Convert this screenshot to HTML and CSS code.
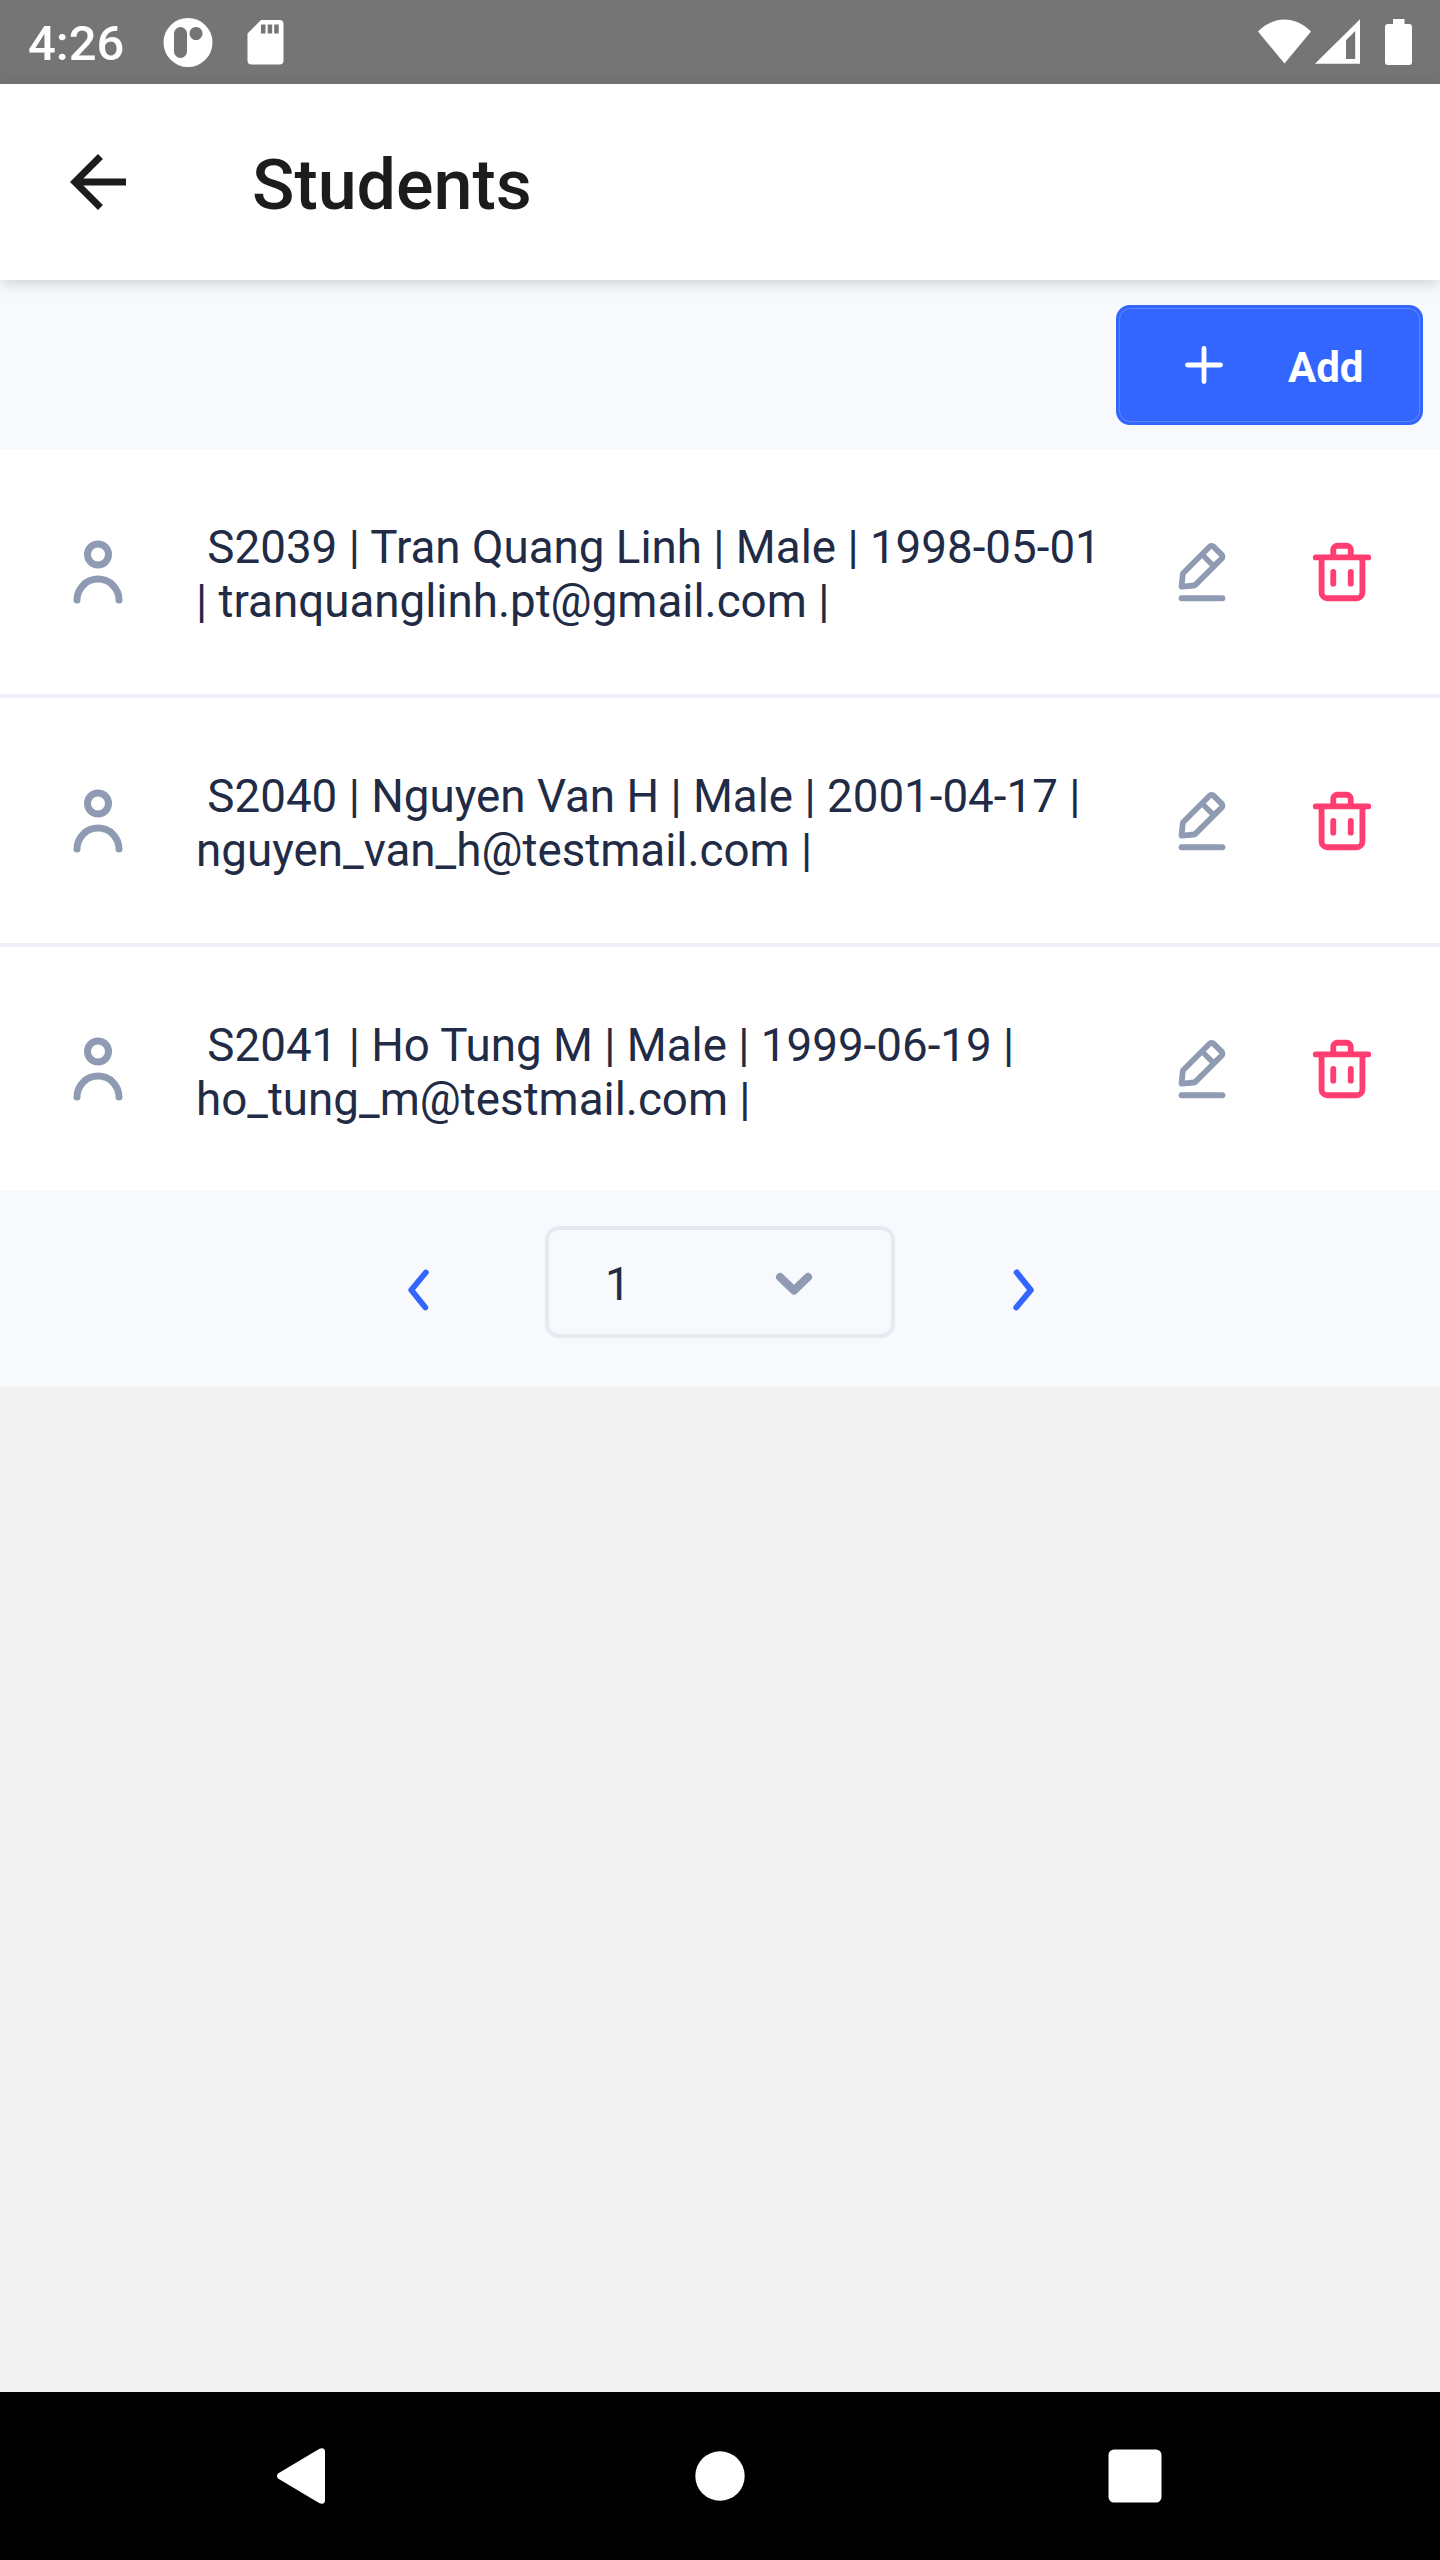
FILE: index.html
```html
<!DOCTYPE html>
<html lang="en">
<head>
<meta charset="utf-8">
<title>Students</title>
<link rel="stylesheet" href="styles.css">
</head>
<body>
<svg class="sprite" width="0" height="0">
  <symbol id="person" viewBox="0 0 24 24"><path d="M12 11a4 4 0 1 0-4-4 4 4 0 0 0 4 4zm0-6a2 2 0 1 1-2 2 2 2 0 0 1 2-2z"/><path d="M12 13a7 7 0 0 0-7 7 1 1 0 0 0 2 0 5 5 0 0 1 10 0 1 1 0 0 0 2 0 7 7 0 0 0-7-7z"/></symbol>
  <symbol id="edit" viewBox="0 0 24 24"><path d="M19 20H5a1 1 0 0 0 0 2h14a1 1 0 0 0 0-2z"/><path d="M5 18h.09l4.17-.38a2 2 0 0 0 1.21-.57l9-9a1.92 1.92 0 0 0-.07-2.71L16.66 2.6A2 2 0 0 0 14 2.53l-9 9a2 2 0 0 0-.57 1.21L4 16.91a1 1 0 0 0 .29.8A1 1 0 0 0 5 18zM15.27 4L18 6.73l-2 1.95L13.32 6zm-8.9 8.91L12 7.32l2.7 2.7-5.6 5.61-3 .28z"/></symbol>
  <symbol id="trash" viewBox="0 0 24 24"><path d="M21 6h-5V4.33A2.42 2.42 0 0 0 13.5 2h-3A2.42 2.42 0 0 0 8 4.33V6H3a1 1 0 0 0 0 2h1v11a3 3 0 0 0 3 3h10a3 3 0 0 0 3-3V8h1a1 1 0 0 0 0-2zM10 4.33c0-.16.21-.33.5-.33h3c.29 0 .5.17.5.33V6h-4zM18 19a1 1 0 0 1-1 1H7a1 1 0 0 1-1-1V8h12z"/><path d="M9 17a1 1 0 0 0 1-1v-4a1 1 0 0 0-2 0v4a1 1 0 0 0 1 1z"/><path d="M15 17a1 1 0 0 0 1-1v-4a1 1 0 0 0-2 0v4a1 1 0 0 0 1 1z"/></symbol>
</svg>
<div class="screen">
  <header class="status">
    <span class="clock">4:26</span>
    <svg class="status-left" width="122" height="50" viewBox="162 17 122 50">
      <path fill-rule="evenodd" d="M188 18a24.500 24.500 0 1 1 0 49a24.500 24.500 0 1 1 0-49zM180.500 27a6.500 6.500 0 0 0-6.500 6.500V51.500a6.500 6.500 0 0 0 13 0V33.500a6.500 6.500 0 0 0-6.500-6.500zM196 27a6.500 6.500 0 1 0 .01 0z"/>
      <path fill-rule="evenodd" d="M261 20h18.500a4 4 0 0 1 4 4V60.500a4 4 0 0 1-4 4H251.500a4 4 0 0 1-4-4V33.500zM261 24.500v9h4.500v-9zM267.700 24.500v9h4.500v-9zM274.200 24.500v9h4.500v-9z"/>
    </svg>
    <svg class="status-right" width="156" height="50" viewBox="1257 17 156 50">
      <path d="M1258 31.500C1274 15.500 1295 15.500 1311 31.500L1284.500 63.500z"/>
      <path fill-rule="evenodd" d="M1315 63.700L1360 19.200V63.700zM1355.200 31L1346 40.200V59H1355.200z"/>
      <path d="M1393 19h11.500v5H1409a3 3 0 0 1 3 3V62a3 3 0 0 1-3 3H1388a3 3 0 0 1-3-3V27a3 3 0 0 1 3-3h5z"/>
    </svg>
  </header>
  <div class="appbar">
    <svg class="back" viewBox="0 0 24 24"><path d="M20 11H7.830l5.590-5.590L12 4l-8 8 8 8 1.410-1.410L7.830 13H20v-2z"/></svg>
    <h1 class="title">Students</h1>
  </div>
  <div class="tools">
    <button class="add">
      <svg class="plus" viewBox="0 0 64 64"><path d="M32 15.500V48.500M15.500 32H48.500"/></svg>
      <span>Add</span>
    </button>
  </div>
  <ul class="list">
    <li class="row">
      <svg class="person"><use href="#person"/></svg>
      <p class="info"> S2039 | Tran Quang Linh | Male | 1998-05-01
| tranquanglinh.pt@gmail.com |</p>
      <svg class="edit"><use href="#edit"/></svg>
      <svg class="trash"><use href="#trash"/></svg>
    </li>
    <li class="row">
      <svg class="person"><use href="#person"/></svg>
      <p class="info"> S2040 | Nguyen Van H | Male | 2001-04-17 |
nguyen_van_h@testmail.com |</p>
      <svg class="edit"><use href="#edit"/></svg>
      <svg class="trash"><use href="#trash"/></svg>
    </li>
    <li class="row">
      <svg class="person"><use href="#person"/></svg>
      <p class="info"> S2041 | Ho Tung M | Male | 1999-06-19 |
ho_tung_m@testmail.com |</p>
      <svg class="edit"><use href="#edit"/></svg>
      <svg class="trash"><use href="#trash"/></svg>
    </li>
  </ul>
  <div class="pager">
    <svg class="arrow" viewBox="0 0 24 24"><path d="M13.830 19a1 1 0 0 1-.78-.37l-4.830-6a1 1 0 0 1 0-1.270l5-6a1 1 0 0 1 1.540 1.280L10.290 12l4.320 5.360a1 1 0 0 1-.78 1.640z"/></svg>
    <div class="select">
      <span>1</span>
      <svg class="chevron" width="38" height="24" viewBox="0 0 38 24"><path d="M5 5L19 18.500L33 5"/></svg>
    </div>
    <svg class="arrow" viewBox="0 0 24 24"><path d="M10 19a1 1 0 0 1-.64-.23 1 1 0 0 1-.13-1.410L13.710 12 9.390 6.630a1 1 0 0 1 .15-1.410 1 1 0 0 1 1.460.15l4.830 6a1 1 0 0 1 0 1.270l-5 6A1 1 0 0 1 10 19z"/></svg>
  </div>
  <main class="blank"></main>
  <nav class="navbar">
    <svg width="50" height="56" viewBox="0 0 50 56"><path d="M2 25.500L43.500 .8Q49 -1 49 4V52Q49 57 43.500 55.200L2 30.500Q0 28 2 25.500z"/></svg>
    <svg class="home" width="50" height="50" viewBox="0 0 50 50"><circle cx="25" cy="25" r="24.700"/></svg>
    <svg width="54" height="54" viewBox="0 0 54 54"><rect x=".5" y=".5" width="53" height="53" rx="5.500"/></svg>
  </nav>
</div>
</body>
</html>
```
FILE: styles.css
```css
* { box-sizing: border-box; }
body { margin: 0; font-family: Roboto, "Liberation Sans", sans-serif; }
svg { display: block; flex: none; }
.sprite { display: none; }
.screen { width: 1440px; height: 2560px; display: flex; flex-direction: column; background: #f2f2f2; }

.status { height: 84px; flex: none; display: flex; align-items: flex-start; background: #757575; padding: 17px 27px 0 28px; fill: #fff; }
.clock { color: #fff; font-size: 49px; font-weight: 500; line-height: 54px; width: 134px; }
.status-right { margin-left: auto; }

.appbar { height: 196px; flex: none; display: flex; align-items: center; padding-left: 56px; background: #fff; box-shadow: 0 3px 14px rgba(0, 0, 0, .17); z-index: 1; }
.back { width: 84px; height: 84px; fill: #1c1c1e; }
.title { margin: 6px 0 0 112px; font-size: 70px; font-weight: 500; line-height: 82px; color: #1c1c1e; }

.tools { height: 169px; flex: none; display: flex; justify-content: flex-end; padding: 25px 17px 0 0; background: #f7f9fc; }
.add { width: 307px; height: 120px; display: flex; align-items: center; border: 3px solid #3366ff; border-radius: 14px; background: #3366ff; box-shadow: inset 0 0 0 1px #5c85ff; color: #fff; padding: 0 0 0 53px; font: 700 42px/50px Roboto, "Liberation Sans", sans-serif; }
.add span { margin: 5px 0 0 52px; }
.plus { width: 64px; height: 64px; stroke: #fff; stroke-width: 4.800px; stroke-linecap: round; }

.list { margin: 0; padding: 0; list-style: none; flex: none; background: #fff; }
.row { height: 249px; display: flex; align-items: center; padding: 0 63px 0 56px; border-bottom: 4px solid #edf1f7; }
.row:last-child { height: 244px; border-bottom: 0; }
.person { width: 84px; height: 84px; fill: #8f9bb3; }
.info { margin: 7px 0 0 56px; width: 971px; font-size: 45.740px; line-height: 54px; white-space: pre; color: #222b45; }
.edit, .trash { width: 70px; height: 70px; }
.edit { fill: #8f9bb3; }
.trash { margin-left: 70px; fill: #ff3d71; }

.pager { height: 196px; flex: none; display: flex; align-items: flex-start; padding: 35px 0 0 385px; background: #f7f9fc; }
.arrow { width: 70px; height: 70px; margin-top: 29px; fill: #3366ff; }
.select { width: 350px; height: 112px; margin: 0 92px 0 90px; display: flex; align-items: center; border: 4px solid #e4e9f2; border-radius: 14px; padding: 0 78px 0 56px; font-size: 45.500px; line-height: 54px; color: #222b45; justify-content: space-between; }
.select span { margin-top: 6px; }
.chevron { margin-top: 3px; fill: none; stroke: #8f9bb3; stroke-width: 8px; stroke-linecap: round; stroke-linejoin: round; }

.blank { flex: 1; }
.navbar { height: 168px; flex: none; display: flex; align-items: center; justify-content: space-between; padding: 0 278px 0 276px; background: #000; fill: #fff; }
.home { margin-left: 5px; }
```
